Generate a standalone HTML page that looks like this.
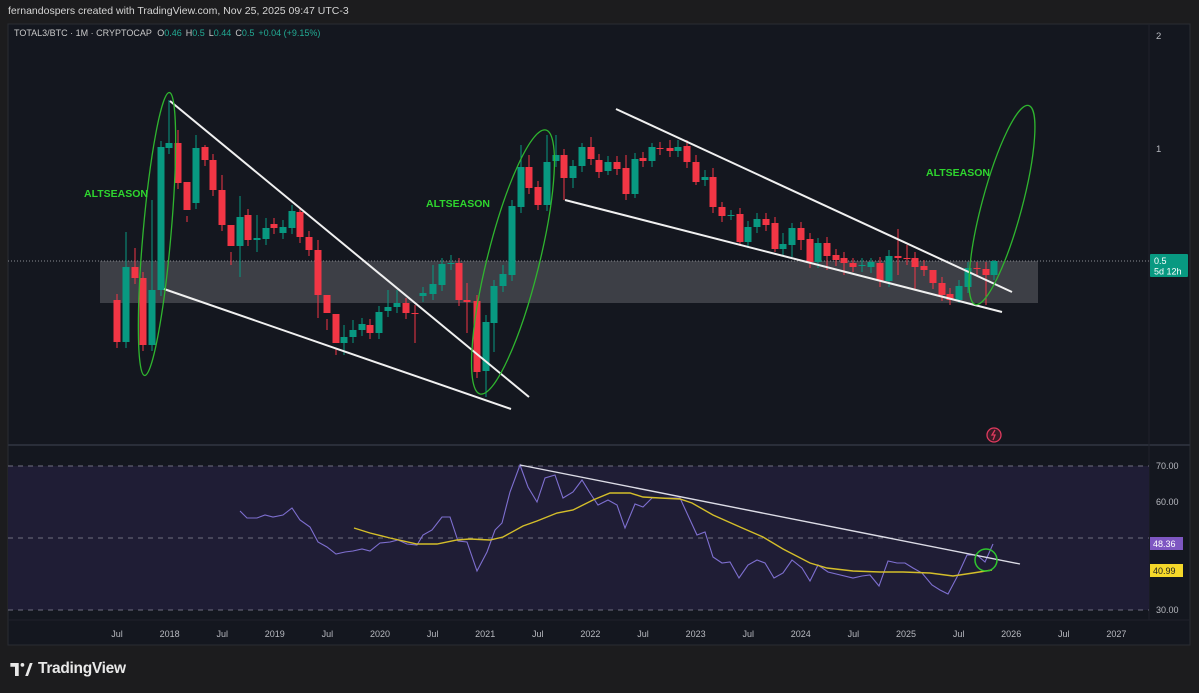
<!DOCTYPE html>
<html><head><meta charset="utf-8"><style>
*{margin:0;padding:0;box-sizing:border-box}
body{width:1199px;height:693px;background:#1c1c1e;font-family:"Liberation Sans",sans-serif;overflow:hidden;position:relative}
.hdr{position:absolute;left:8px;top:5px;font-size:10.5px;color:#d4d4d4}
svg{position:absolute;left:0;top:0}
.logo{position:absolute;left:10px;top:660px;color:#e8e8e8;font-size:15.5px;font-weight:bold;display:flex;align-items:center;gap:5px;letter-spacing:-0.3px}
</style></head><body>
<div class="hdr">fernandospers created with TradingView.com, Nov 25, 2025 09:47 UTC-3</div>
<svg id="s" width="1199" height="693" xmlns="http://www.w3.org/2000/svg"></svg>
<div class="logo"><svg width="23" height="13" viewBox="0 0 24 14" style="position:static"><path d="M0 0h9v14H5V4H0z M13 0a2 2 0 1 1 0 4a2 2 0 1 1 0-4z M16 14l5-14h3l-5 14z" fill="#e8e8e8"/></svg>TradingView</div>
<script>
const C=[
[117,300,342,'r'],[126,267,342,'g',232],[135,267,278,'r',248],[143,278,345,'r'],[152,290,345,'g',200],[161,147,290,'g'],[169,143,148,'g',100],[178,143,183,'r',130],[187,182,210,'r',222],[196,148,203,'g',135],[205,147,160,'r',145],[213,160,190,'r'],[222,190,225,'r',175],[231,225,246,'r',265],[240,217,246,'g',196,277],[248,215,240,'r'],[257,238,240,'g',215,252],[266,228,239,'g',218],[274,224,228,'r'],[283,227,233,'g',220],[292,211,228,'g'],[300,212,237,'r',207],[309,237,250,'r'],[318,250,295,'r',240,318],[327,295,313,'r',330],[336,314,343,'r',355],[344,337,343,'g',325,355],[353,330,337,'g',320],[362,324,330,'g',318],[370,325,333,'r'],[379,312,333,'g'],[388,307,311,'g',290],[397,303,307,'g',290],
[406,303,313,'r',298],[415,313,314,'r',305,343],[423,293,296,'g'],[433,284,294,'g',265],[442,264,285,'g'],[451,263,264,'g',255],[459,263,300,'r',258],[467,300,302,'r',283,333],[477,301,372,'r'],[486,322,371,'g',315,397],[494,286,323,'g',,352],[503,274,286,'g',265],[512,206,275,'g',200],[521,167,207,'g',145],[529,167,188,'r',155],[538,187,205,'r',,210],[547,162,205,'g',135],[556,155,161,'g',135],[564,155,178,'r',,200],[573,166,178,'g',,188],[582,147,166,'g',143],[591,147,159,'r',137],[599,160,172,'r'],[608,162,171,'g',,175],[617,162,169,'r'],[626,168,194,'r',155],[635,159,194,'g',153,198],[643,158,161,'r',152],[652,147,161,'g',143],[660,148,149,'r',142],[670,148,151,'r',140],[678,147,151,'g',140],[687,146,162,'r',140],
[696,162,182,'r',155,185],[705,177,180,'g',170],[713,177,207,'r',168],[722,207,216,'r',202],[731,215,216,'g',210,220],[740,214,242,'r',,246],[748,227,242,'g'],[757,219,227,'g'],[766,219,225,'r'],[775,223,249,'r',,252],[783,244,249,'g',233],[792,228,245,'g',223,257],[801,228,240,'r',,250],[810,239,262,'r'],[818,243,262,'g',238],[827,243,256,'r',,270],[836,255,260,'r'],[844,258,263,'r',,275],[853,263,267,'r',258,272],[862,265,266,'g',258,272],[871,262,267,'g',258],[880,263,281,'r'],[889,256,281,'g',,287],[898,256,258,'r',229,275],[907,258,259,'r',245],[915,258,267,'r',,290],[924,266,270,'r'],[933,270,283,'r',277],[942,283,295,'r'],[950,294,300,'r',,305],[959,286,300,'g',,303],[968,268,287,'g'],[977,268,269,'r',262],[986,269,275,'r',262,305],[994,261,275,'g',260,280]];
const rsi=[[240,511],[247,518],[257,518],[265,515],[273,517],[283,515],[292,508],[300,520],[310,527],[318,542],[327,547],[336,554],[345,552],[353,551],[362,549],[370,551],[380,543],[390,542],[398,540],[407,544],[417,545],[423,535],[432,530],[442,517],[450,517],[458,541],[467,542],[477,571],[487,552],[495,530],[502,523],[510,492],[520,465],[528,487],[537,502],[545,478],[555,475],[563,498],[573,492],[582,480],[590,493],[598,505],[608,500],[617,505],[625,528],[635,504],[643,507],[652,498],[680,498],[697,535],[705,532],[713,557],[722,563],[730,562],[739,578],[748,565],[757,560],[765,563],[774,578],[783,573],[792,560],[802,568],[810,581],[818,565],[828,572],[853,578],[862,576],[870,575],[879,586],[888,561],[897,563],[905,563],[913,568],[922,573],[932,585],[940,590],[948,594],[957,577],[967,555],[977,555],[985,562],[993,544]];
const ma=[[354,528],[370,533],[390,538],[417,544],[437,544],[457,540],[470,539],[490,540],[503,537],[523,526],[537,521],[557,513],[573,510],[593,500],[610,493],[630,493],[643,497],[660,498],[680,499],[692,503],[713,515],[740,527],[763,537],[783,549],[810,563],[827,568],[853,571],[880,572],[903,572],[930,573],[953,576],[973,573],[992,570]];
let h='';
h+='<rect x="8" y="24" width="1182" height="621" fill="#14171f" stroke="#2a2c33"/>';
h+='<line x1="8" y1="445" x2="1190" y2="445" stroke="#2a2e39" stroke-width="2"/>';
h+='<line x1="1149" y1="24" x2="1149" y2="620" stroke="#1f222b"/>';
h+='<line x1="8" y1="620" x2="1190" y2="620" stroke="#1f222b"/>';
h+='<rect x="8" y="466" width="1141" height="144" fill="#1f1d35"/>';
[466,538,610].forEach(y=>h+=`<line x1="8" y1="${y}" x2="1149" y2="${y}" stroke="#6f6f80" stroke-dasharray="5,5"/>`);
h+='<rect x="100" y="261" width="938" height="42" fill="#3d3f46"/>';
h+='<line x1="8" y1="261" x2="1149" y2="261" stroke="#8a8c93" stroke-dasharray="1,2"/>';
C.forEach(c=>{const[x,a,b,k,wt,wb]=c;const col=k=='g'?'#089981':'#f23645';const t=wt||a-6,bt=wb||b+6;
h+=`<line x1="${x}" y1="${t}" x2="${x}" y2="${bt}" stroke="${col}"/>`;h+=`<rect x="${x-3.5}" y="${a}" width="7" height="${Math.max(1,b-a)}" fill="${col}"/>`;});
[[170,101,529,397],[164,289,511,409],[616,109,1012,292],[565,200,1002,312]].forEach(l=>h+=`<line x1="${l[0]}" y1="${l[1]}" x2="${l[2]}" y2="${l[3]}" stroke="#f0f0f0" stroke-width="2"/>`);
h+='<ellipse cx="157" cy="234" rx="14" ry="142" transform="rotate(5 157 234)" fill="none" stroke="#2fb52f" stroke-width="1.3"/>';
h+='<ellipse cx="513" cy="262" rx="26" ry="136" transform="rotate(14 513 262)" fill="none" stroke="#2fb52f" stroke-width="1.3"/>';
h+='<ellipse cx="1002" cy="205" rx="20" ry="103" transform="rotate(15 1002 205)" fill="none" stroke="#2fb52f" stroke-width="1.3"/>';
[[84,197],[426,207],[926,176]].forEach(p=>h+=`<text x="${p[0]}" y="${p[1]}" font-size="10.5" font-weight="bold" fill="#2ed52e">ALTSEASON</text>`);
h+='<polyline points="'+rsi.map(p=>p.join(',')).join(' ')+'" fill="none" stroke="#7e6fd0" stroke-width="1.1"/>';
h+='<polyline points="'+ma.map(p=>p.join(',')).join(' ')+'" fill="none" stroke="#d4be2a" stroke-width="1.4"/>';
h+='<line x1="520" y1="465" x2="1020" y2="564" stroke="#dcdce6" stroke-width="1.4"/>';
h+='<circle cx="986" cy="560" r="11" fill="none" stroke="#2fc52f" stroke-width="1.5"/>';
h+='<circle cx="994" cy="435" r="7" fill="#3a1a26" stroke="#e03a5e" stroke-width="1.3"/><path d="M995 430l-3 5h3l-2 5" stroke="#e03a5e" fill="none" stroke-width="1.3"/>';
h+='<text x="14" y="36" font-size="9" fill="#c8c8c8">TOTAL3/BTC · 1M · CRYPTOCAP <tspan dx="3">O</tspan><tspan fill="#22ab94">0.46</tspan><tspan dx="4">H</tspan><tspan fill="#22ab94">0.5</tspan><tspan dx="4">L</tspan><tspan fill="#22ab94">0.44</tspan><tspan dx="4">C</tspan><tspan fill="#22ab94">0.5</tspan><tspan dx="4" fill="#22ab94">+0.04 (+9.15%)</tspan></text>';
h+='<text x="1156" y="39" font-size="9.5" fill="#b8bac0">2</text><text x="1156" y="152" font-size="9.5" fill="#b8bac0">1</text>';
h+='<rect x="1150" y="254" width="38" height="23" rx="1" fill="#089981"/><text x="1154" y="264" font-size="9" fill="#fff">0.5</text><text x="1154" y="274.5" font-size="9" fill="#fff">5d 12h</text>';
[['70.00',469],['60.00',505],['30.00',613]].forEach(a=>h+=`<text x="1156" y="${a[1]}" font-size="9" fill="#b8bac0">${a[0]}</text>`);
h+='<rect x="1150" y="537" width="33" height="13" fill="#7e57c2"/><text x="1153" y="547" font-size="9" fill="#fff">48.36</text>';
h+='<rect x="1150" y="564" width="33" height="13" fill="#f5d82a"/><text x="1153" y="574" font-size="9" fill="#222">40.99</text>';
const T=['Jul','2018','Jul','2019','Jul','2020','Jul','2021','Jul','2022','Jul','2023','Jul','2024','Jul','2025','Jul','2026','Jul','2027'];
T.forEach((t,i)=>h+=`<text x="${117+i*52.6}" y="637" font-size="9" fill="#b8bac0" text-anchor="middle">${t}</text>`);
document.getElementById('s').innerHTML=h;
</script>
</body></html>
